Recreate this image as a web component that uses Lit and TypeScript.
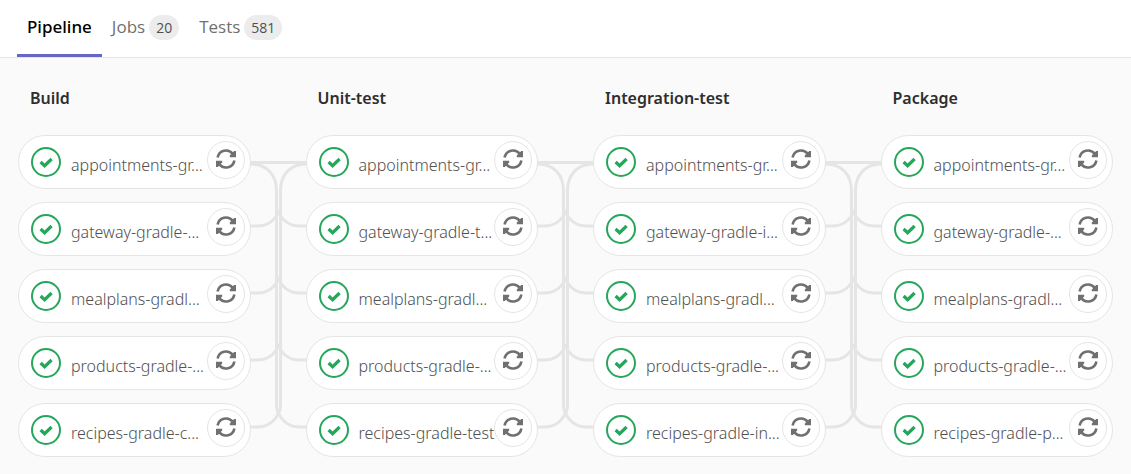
import { LitElement, html, css, svg } from "lit";
import { customElement, property } from "lit/decorators.js";

interface Stage {
  name: string;
  jobs: string[];
}

const stages: Stage[] = [
  {
    name: "Build",
    jobs: ["appointments-gr...", "gateway-gradle-...", "mealplans-gradl...", "products-gradle-...", "recipes-gradle-c..."],
  },
  {
    name: "Unit-test",
    jobs: ["appointments-gr...", "gateway-gradle-t...", "mealplans-gradl...", "products-gradle-...", "recipes-gradle-test"],
  },
  {
    name: "Integration-test",
    jobs: ["appointments-gr...", "gateway-gradle-i...", "mealplans-gradl...", "products-gradle-...", "recipes-gradle-in..."],
  },
  {
    name: "Package",
    jobs: ["appointments-gr...", "gateway-gradle-...", "mealplans-gradl...", "products-gradle-...", "recipes-gradle-p..."],
  },
];

@customElement("pipeline-job")
export class PipelineJob extends LitElement {
  @property() name = "";

  static styles = css`
    :host {
      display: block;
    }
    .job {
      box-sizing: border-box;
      display: flex;
      align-items: center;
      height: 54px;
      padding: 0 5px 0 12px;
      border: 1px solid #e5e5e5;
      border-radius: 27px;
      background: #fff;
    }
    .link {
      display: flex;
      flex: 1;
      align-items: center;
      gap: 10px;
      min-width: 0;
      color: #505050;
      text-decoration: none;
    }
    .status {
      flex: none;
      width: 30px;
      height: 30px;
    }
    .name {
      padding-top: 6px;
      font-family: "Noto Sans", sans-serif;
      font-size: 16px;
      line-height: 24px;
      font-weight: 300;
      white-space: nowrap;
    }
    .retry {
      box-sizing: border-box;
      display: flex;
      flex: none;
      align-items: center;
      justify-content: center;
      width: 38px;
      height: 38px;
      margin-bottom: 4px;
      padding: 0 0 2px;
      border: 1px solid #e5e5e5;
      border-radius: 50%;
      background: #fff;
    }
    .retry-icon {
      flex: none;
      width: 22px;
      height: 22px;
    }
  `;

  render() {
    return html`
      <div class="job">
        <a class="link" href="#job">
          <svg class="status" viewBox="0 0 30 30" aria-hidden="true">
            <circle cx="15" cy="15" r="14" fill="none" stroke="#26a65b" stroke-width="2" />
            <path d="M9.6 15 13.6 18.7 20.6 12" fill="none" stroke="#26a65b" stroke-width="3.2" />
          </svg>
          <span class="name">${this.name}</span>
        </a>
        <button class="retry" type="button" aria-label="Retry">
          <svg class="retry-icon" viewBox="0 0 22 22" aria-hidden="true">
            <path
              d="M2.6 9.6A8.6 8.6 0 0 1 17.6 5.6M19.4 12.4A8.6 8.6 0 0 1 4.4 16.4"
              fill="none"
              stroke="#707070"
              stroke-width="2.6"
            />
            <path d="M21 3V9.2H14.8V7.4L19.2 3ZM1 19V12.8H7.2V14.6L2.8 19Z" fill="#707070" />
          </svg>
        </button>
      </div>
    `;
  }
}

@customElement("stage-links")
export class StageLinks extends LitElement {
  @property({ type: Number }) rows = 5;

  static styles = css`
    :host {
      display: block;
    }
    .links {
      display: block;
      width: 100%;
      overflow: visible;
    }
  `;

  render() {
    const pitch = 67;
    const last = 24 + pitch * (this.rows - 1);
    const turns = Array.from({ length: this.rows - 1 }, (_, i) => 24 + pitch * (i + 1));
    return html`
      <svg class="links" height=${last + 30} viewBox="0 0 55 ${last + 30}" aria-hidden="true">
        <g fill="none" stroke="#e5e5e5" stroke-width="3">
          <path d="M-1 27.5H56" />
          <path d="M-1 29H0C16 29 25.5 40 25.5 56V${last - 22}Q25.5 ${last - 16} 28.5 ${last - 13}" />
          <path d="M56 29H55C39 29 29.5 40 29.5 56V${last - 22}Q29.5 ${last - 16} 26.5 ${last - 13}" />
          ${turns.map(
            (y) => svg`
              <path d="M-1 ${y}H6C16 ${y} 24 ${y - 5} 28.5 ${y - 16}" />
              <path d="M56 ${y}H49C39 ${y} 31 ${y - 5} 26.5 ${y - 16}" />
            `,
          )}
        </g>
      </svg>
    `;
  }
}

@customElement("app-root")
export class AppRoot extends LitElement {
  static styles = css`
    :host {
      display: block;
      min-height: 100vh;
      background: #fafafa;
      font-family: "Open Sans", "Noto Sans", sans-serif;
    }
    .tabs {
      display: flex;
      height: 57px;
      padding-left: 17px;
      border-bottom: 1px solid #e5e5e5;
      background: #fff;
    }
    .tab {
      box-sizing: border-box;
      display: flex;
      gap: 4px;
      height: 57px;
      padding: 15px 10px 0;
      color: #707070;
      font-size: 17px;
      line-height: 24px;
      text-decoration: none;
    }
    .tab.active {
      border-bottom: 3px solid #6666c4;
      color: #000;
      font-family: "Noto Sans", sans-serif;
      font-weight: 500;
    }
    .count {
      height: 25px;
      padding: 0 7px;
      border-radius: 13px;
      background: #ececec;
      color: #505050;
      font-size: 14px;
      line-height: 25px;
    }
    .pipeline {
      display: grid;
      grid-template-columns: minmax(0, 1fr) 55px minmax(0, 1fr) 55px minmax(0, 1fr) 55px minmax(0, 1fr);
      padding: 28px 18px 16px;
    }
    .title {
      margin: 0 0 25px;
      padding-left: 12px;
      color: #2e2e2e;
      font-family: "Noto Sans", sans-serif;
      font-size: 16px;
      line-height: 24px;
      font-weight: 600;
    }
    .jobs {
      display: grid;
      grid-template-columns: minmax(0, 1fr);
      gap: 13px;
      margin: 0;
      padding: 0;
      list-style: none;
    }
    .between {
      padding-top: 49px;
    }
  `;

  render() {
    return html`
      <nav class="tabs">
        <a class="tab active" href="#pipeline">Pipeline</a>
        <a class="tab" href="#jobs">Jobs <span class="count">20</span></a>
        <a class="tab" href="#tests">Tests <span class="count">581</span></a>
      </nav>
      <main class="pipeline">
        ${stages.map(
          (stage, i) => html`
            ${i > 0 ? html`<stage-links class="between" .rows=${stage.jobs.length}></stage-links>` : null}
            <section class="stage">
              <h2 class="title">${stage.name}</h2>
              <ul class="jobs">
                ${stage.jobs.map((job) => html`<li><pipeline-job .name=${job}></pipeline-job></li>`)}
              </ul>
            </section>
          `,
        )}
      </main>
    `;
  }
}
